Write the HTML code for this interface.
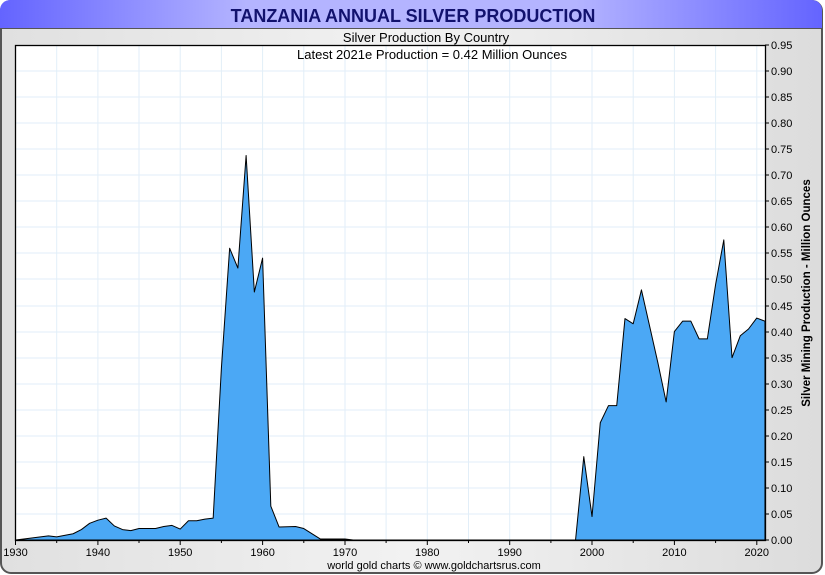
<!DOCTYPE html>
<html><head><meta charset="utf-8"><style>
html,body{margin:0;padding:0;background:#fff;}
body{width:825px;height:575px;position:relative;overflow:hidden;font-family:"Liberation Sans",sans-serif;}
</style></head><body>
<svg width="825" height="575" viewBox="0 0 825 575" xmlns="http://www.w3.org/2000/svg" style="position:absolute;left:0;top:0">
<defs>
<linearGradient id="bg" x1="0" y1="0" x2="1" y2="0"><stop offset="0" stop-color="#e0e0e0"/><stop offset="0.5" stop-color="#f2f2f2"/><stop offset="1" stop-color="#dcdcdc"/></linearGradient>
<linearGradient id="tb" x1="0" y1="0" x2="1" y2="0"><stop offset="0" stop-color="#6464ff"/><stop offset="0.3" stop-color="#b4b4ff"/><stop offset="0.7" stop-color="#b4b4ff"/><stop offset="1" stop-color="#6464ff"/></linearGradient>
<clipPath id="cp"><rect x="0" y="0" width="822" height="572" rx="10"/></clipPath>
</defs>
<rect x="1" y="1" width="821" height="572" rx="10" fill="url(#bg)" stroke="#555" stroke-width="2"/>
<g clip-path="url(#cp)"><rect x="0" y="0" width="822" height="28" fill="url(#tb)"/></g>
<line x1="1" y1="28.5" x2="822" y2="28.5" stroke="#555" stroke-width="1"/>
<text x="413" y="22" text-anchor="middle" font-size="18" font-weight="bold" fill="#12126e">TANZANIA ANNUAL SILVER PRODUCTION</text>
<rect x="15.5" y="45.5" width="750" height="495" fill="#fff"/>
<g stroke="#e2eef8" stroke-width="1">
<line x1="15.5" y1="514" x2="765" y2="514"/><line x1="15.5" y1="488" x2="765" y2="488"/><line x1="15.5" y1="462" x2="765" y2="462"/><line x1="15.5" y1="436" x2="765" y2="436"/><line x1="15.5" y1="410" x2="765" y2="410"/><line x1="15.5" y1="384" x2="765" y2="384"/><line x1="15.5" y1="358" x2="765" y2="358"/><line x1="15.5" y1="332" x2="765" y2="332"/><line x1="15.5" y1="306" x2="765" y2="306"/><line x1="15.5" y1="279" x2="765" y2="279"/><line x1="15.5" y1="253" x2="765" y2="253"/><line x1="15.5" y1="227" x2="765" y2="227"/><line x1="15.5" y1="201" x2="765" y2="201"/><line x1="15.5" y1="175" x2="765" y2="175"/><line x1="15.5" y1="149" x2="765" y2="149"/><line x1="15.5" y1="123" x2="765" y2="123"/><line x1="15.5" y1="97" x2="765" y2="97"/><line x1="15.5" y1="71" x2="765" y2="71"/>
<line x1="56.7" y1="45" x2="56.7" y2="540"/><line x1="97.9" y1="45" x2="97.9" y2="540"/><line x1="139" y1="45" x2="139" y2="540"/><line x1="180.2" y1="45" x2="180.2" y2="540"/><line x1="221.4" y1="45" x2="221.4" y2="540"/><line x1="262.6" y1="45" x2="262.6" y2="540"/><line x1="303.8" y1="45" x2="303.8" y2="540"/><line x1="345" y1="45" x2="345" y2="540"/><line x1="386.1" y1="45" x2="386.1" y2="540"/><line x1="427.3" y1="45" x2="427.3" y2="540"/><line x1="468.5" y1="45" x2="468.5" y2="540"/><line x1="509.7" y1="45" x2="509.7" y2="540"/><line x1="550.9" y1="45" x2="550.9" y2="540"/><line x1="592" y1="45" x2="592" y2="540"/><line x1="633.2" y1="45" x2="633.2" y2="540"/><line x1="674.4" y1="45" x2="674.4" y2="540"/><line x1="715.6" y1="45" x2="715.6" y2="540"/><line x1="756.8" y1="45" x2="756.8" y2="540"/>
</g>
<g transform="translate(15.5,540) scale(8.236,-521)">
<path vector-effect="non-scaling-stroke" fill="#4ba8f5" stroke="#000" stroke-width="1" stroke-linejoin="round" d="M0,0 L1,0.002 L4,0.008 L5,0.006 L7,0.012 L8,0.02 L9,0.032 L10,0.038 L11,0.042 L12,0.027 L13,0.02 L14,0.018 L15,0.022 L17,0.022 L18,0.026 L19,0.028 L20,0.021 L21,0.037 L22,0.037 L23,0.04 L24,0.042 L25,0.33 L26,0.56 L27,0.522 L28,0.738 L29,0.476 L30,0.541 L31,0.065 L32,0.025 L34,0.026 L35,0.022 L37,0.002 L40,0.002 L41,0 L68,0 L69,0.16 L70,0.045 L71,0.225 L72,0.258 L73,0.258 L74,0.425 L75,0.415 L76,0.48 L77,0.41 L78,0.34 L79,0.265 L80,0.4 L81,0.42 L82,0.42 L83,0.386 L84,0.386 L85,0.49 L86,0.576 L87,0.35 L88,0.392 L89,0.405 L90,0.426 L91,0.42 L91,0 Z"/>
</g>
<rect x="15.5" y="45.5" width="750" height="495" fill="none" stroke="#000" stroke-width="1.3"/>
<g font-size="13" fill="#000" text-anchor="middle">
<text x="426" y="42">Silver Production By Country</text>
<text x="432" y="59">Latest 2021e Production = 0.42 Million Ounces</text>
</g>
<g stroke="#000" stroke-width="1">
<line x1="15.5" y1="540" x2="15.5" y2="545"/><line x1="56.7" y1="540" x2="56.7" y2="543"/><line x1="97.9" y1="540" x2="97.9" y2="545"/><line x1="139" y1="540" x2="139" y2="543"/><line x1="180.2" y1="540" x2="180.2" y2="545"/><line x1="221.4" y1="540" x2="221.4" y2="543"/><line x1="262.6" y1="540" x2="262.6" y2="545"/><line x1="303.8" y1="540" x2="303.8" y2="543"/><line x1="345" y1="540" x2="345" y2="545"/><line x1="386.1" y1="540" x2="386.1" y2="543"/><line x1="427.3" y1="540" x2="427.3" y2="545"/><line x1="468.5" y1="540" x2="468.5" y2="543"/><line x1="509.7" y1="540" x2="509.7" y2="545"/><line x1="550.9" y1="540" x2="550.9" y2="543"/><line x1="592" y1="540" x2="592" y2="545"/><line x1="633.2" y1="540" x2="633.2" y2="543"/><line x1="674.4" y1="540" x2="674.4" y2="545"/><line x1="715.6" y1="540" x2="715.6" y2="543"/><line x1="756.8" y1="540" x2="756.8" y2="545"/>
</g>
<g font-size="11" fill="#000" text-anchor="middle">
<text x="15.5" y="556">1930</text><text x="97.9" y="556">1940</text><text x="180.2" y="556">1950</text><text x="262.6" y="556">1960</text><text x="345" y="556">1970</text><text x="427.3" y="556">1980</text><text x="509.7" y="556">1990</text><text x="592" y="556">2000</text><text x="674.4" y="556">2010</text><text x="756.8" y="556">2020</text>
</g>
<text x="434" y="569" font-size="11" text-anchor="middle" fill="#000">world gold charts © www.goldchartsrus.com</text>
<g stroke="#000" stroke-width="1">
<line x1="765" y1="540" x2="769" y2="540"/><line x1="765" y1="514" x2="769" y2="514"/><line x1="765" y1="488" x2="769" y2="488"/><line x1="765" y1="462" x2="769" y2="462"/><line x1="765" y1="436" x2="769" y2="436"/><line x1="765" y1="410" x2="769" y2="410"/><line x1="765" y1="384" x2="769" y2="384"/><line x1="765" y1="358" x2="769" y2="358"/><line x1="765" y1="332" x2="769" y2="332"/><line x1="765" y1="306" x2="769" y2="306"/><line x1="765" y1="279" x2="769" y2="279"/><line x1="765" y1="253" x2="769" y2="253"/><line x1="765" y1="227" x2="769" y2="227"/><line x1="765" y1="201" x2="769" y2="201"/><line x1="765" y1="175" x2="769" y2="175"/><line x1="765" y1="149" x2="769" y2="149"/><line x1="765" y1="123" x2="769" y2="123"/><line x1="765" y1="97" x2="769" y2="97"/><line x1="765" y1="71" x2="769" y2="71"/><line x1="765" y1="45" x2="769" y2="45"/>
</g>
<g font-size="11" fill="#000">
<text x="771" y="544">0.00</text><text x="771" y="518">0.05</text><text x="771" y="492">0.10</text><text x="771" y="466">0.15</text><text x="771" y="440">0.20</text><text x="771" y="414">0.25</text><text x="771" y="388">0.30</text><text x="771" y="362">0.35</text><text x="771" y="336">0.40</text><text x="771" y="310">0.45</text><text x="771" y="283">0.50</text><text x="771" y="257">0.55</text><text x="771" y="231">0.60</text><text x="771" y="205">0.65</text><text x="771" y="179">0.70</text><text x="771" y="153">0.75</text><text x="771" y="127">0.80</text><text x="771" y="101">0.85</text><text x="771" y="75">0.90</text><text x="771" y="49">0.95</text>
</g>
<text transform="translate(810,293) rotate(-90)" font-size="11.5" font-weight="bold" text-anchor="middle" fill="#000">Silver Mining Production - Million Ounces</text>
</svg>
</body></html>
